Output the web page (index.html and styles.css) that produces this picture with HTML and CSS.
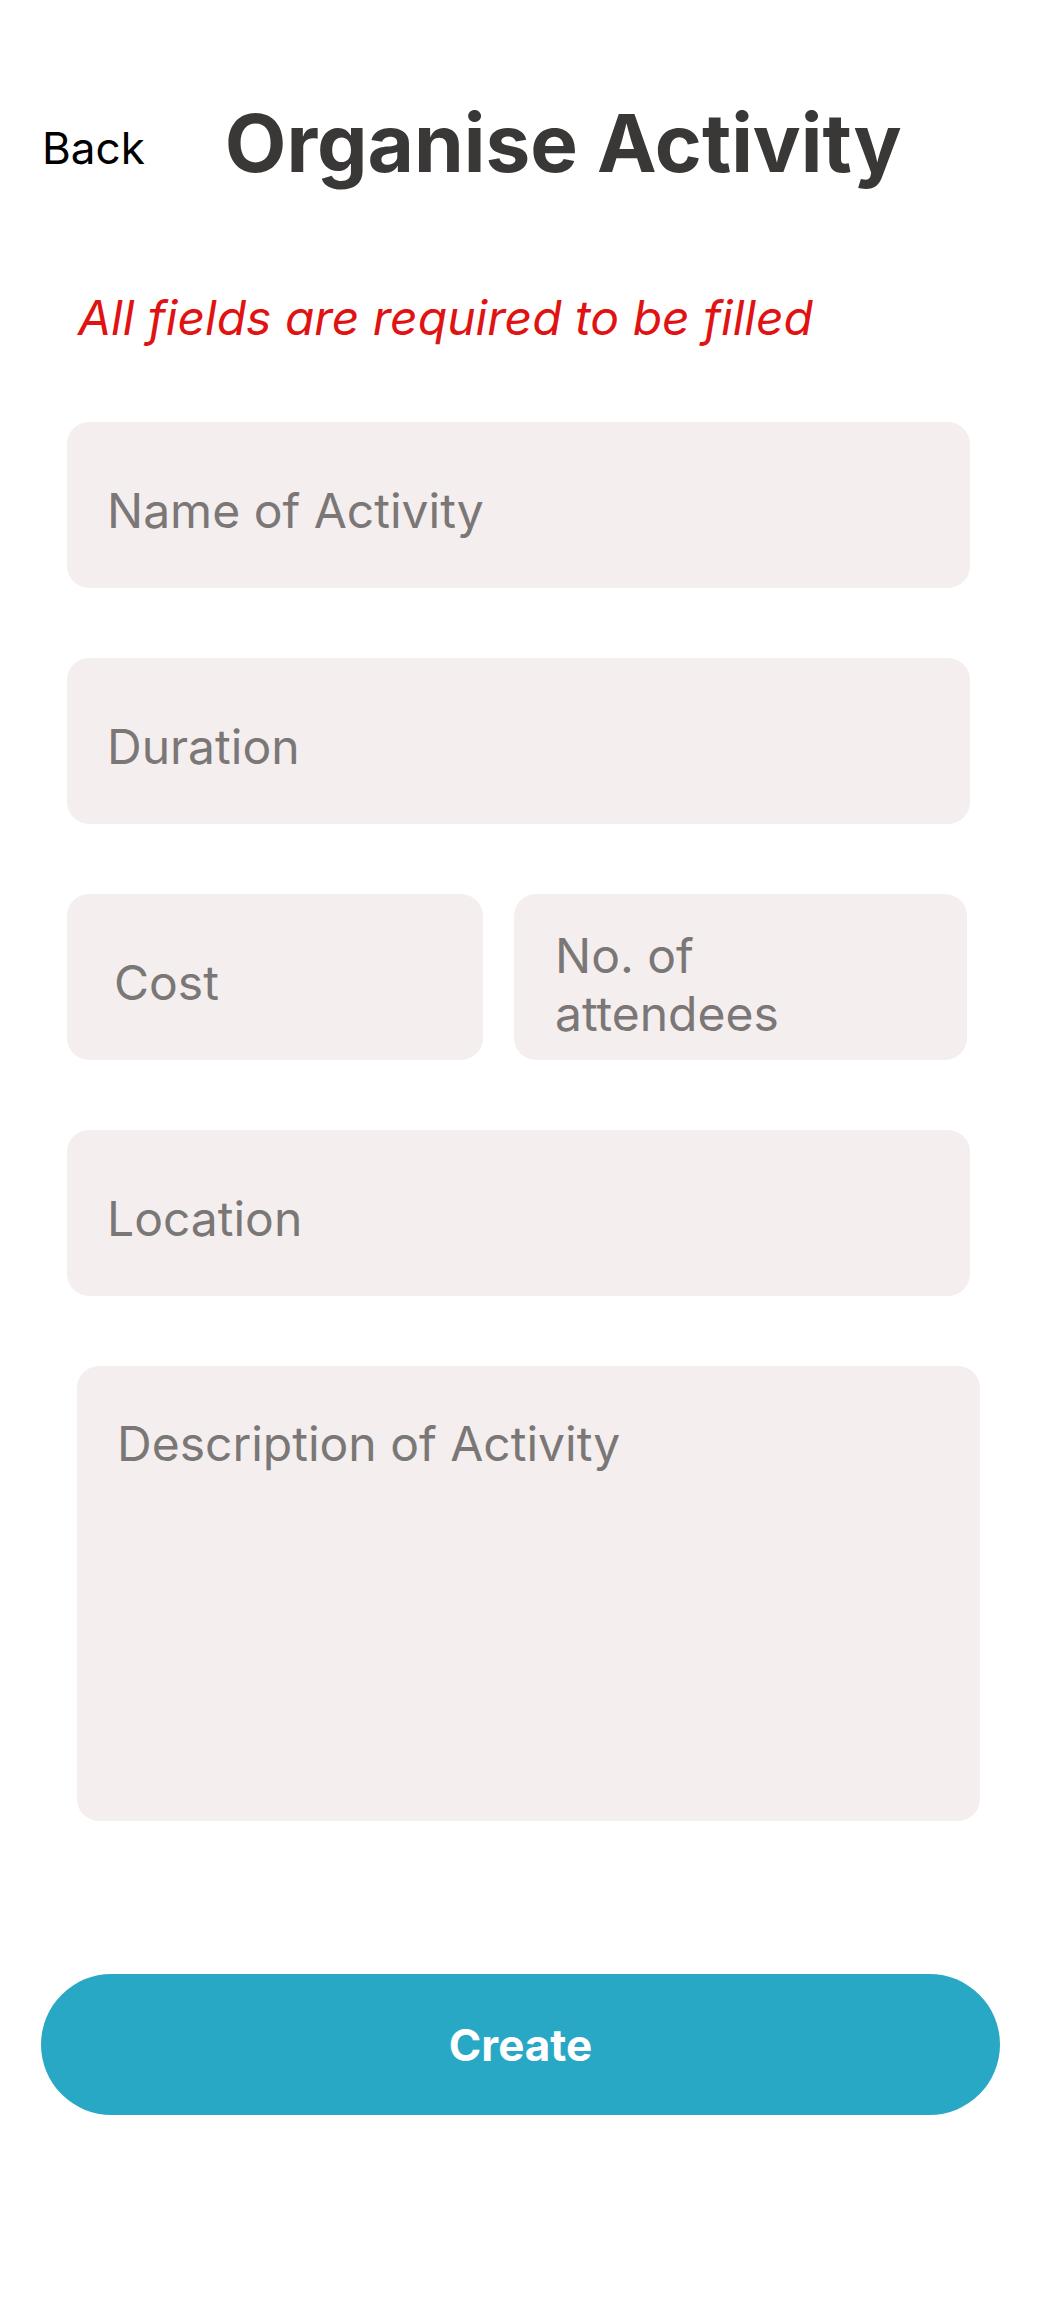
FILE: index.html
```html
<!DOCTYPE html>
<html lang="en">
  <head>
    <meta charset="UTF-8" />
    <meta name="viewport" content="width=device-width, initial-scale=1.0" />
    <title>Organise Activity</title>
    <link rel="stylesheet" href="styles.css">
  </head>
  <body>
    <div class="header">
      <a class="back" href="#">Back</a>
      <h1>Organise Activity</h1>
    </div>

    <p class="notice">All fields are required to be filled</p>

    <form class="form">
      <input class="field" type="text" placeholder="Name of Activity" />
      <input class="field" type="text" placeholder="Duration" />
      <div class="row">
        <input class="field cost" type="text" placeholder="Cost" />
        <textarea class="field attendees" placeholder="No. of attendees"></textarea>
      </div>
      <input class="field" type="text" placeholder="Location" />
      <textarea class="field description" placeholder="Description of Activity"></textarea>
    </form>

    <button class="create" type="button">Create</button>
  </body>
</html>
```

FILE: styles.css
```css
body {
  margin: 0;
  background: #fff;
  font-family: Inter, "Noto Sans", sans-serif;
}
.header {
  display: flex;
  align-items: flex-start;
  gap: 80px;
  padding: 94px 0 0 42px;
}
.back {
  padding-top: 28px;
  font-size: 44px;
  line-height: 53px;
  color: #000;
  text-decoration: none;
}
h1 {
  margin: 0;
  font-size: 80px;
  font-weight: 700;
  line-height: 97px;
  color: #3a3737;
}
.notice {
  margin: 98px 0 0 78px;
  font-size: 48px;
  line-height: 58px;
  font-style: italic;
  color: #e01212;
}
.form {
  display: flex;
  flex-direction: column;
  gap: 70px;
  width: 903px;
  margin: 75px 0 0 67px;
}
.field {
  display: block;
  box-sizing: border-box;
  width: 100%;
  height: 166px;
  margin: 0;
  padding: 10px 40px 0;
  border: none;
  border-radius: 22px;
  outline: none;
  background: #f4eeee;
  font-family: inherit;
  font-size: 48px;
  line-height: 58px;
  color: #333;
}
.field::placeholder {
  color: #7a7776;
  opacity: 1;
}
textarea.field {
  resize: none;
}
.row {
  display: flex;
  gap: 31px;
}
.cost {
  width: 416px;
  padding-left: 47px;
}
.attendees {
  width: 453px;
  padding: 33px 60px 0 41px;
  overflow: hidden;
}
.description {
  height: 455px;
  margin-left: 10px;
  padding: 49px 40px 0;
}
.create {
  display: block;
  width: 959px;
  height: 141px;
  margin: 153px 0 0 41px;
  border: none;
  border-radius: 71px;
  background: #29a8c6;
  color: #fff;
  font-family: inherit;
  font-size: 44px;
  font-weight: 700;
  cursor: pointer;
}
```
